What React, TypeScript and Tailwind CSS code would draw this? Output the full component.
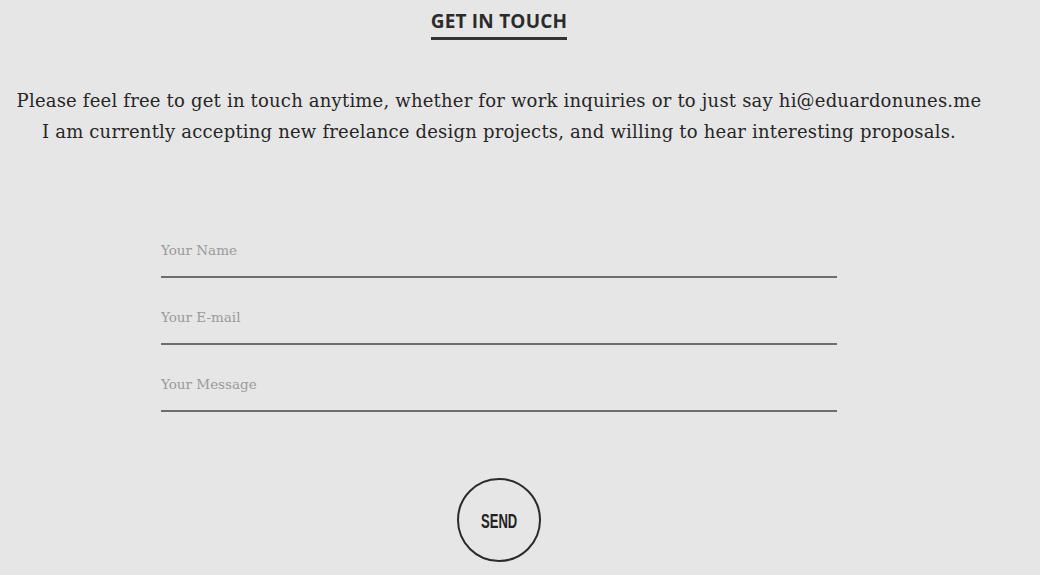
export default function App() {
  return (
    <div className="flex min-h-[575px] w-full flex-col items-center bg-[#e6e6e6] pr-[42px] text-[#333]">
      <h2 className="mt-[8px] border-b-[3px] border-[#333] pb-[3px] font-['Open_Sans',sans-serif] text-[19px] font-bold leading-[26px] tracking-[0.2px] text-[#2b2b2b]">
        GET IN TOUCH
      </h2>

      <div className="mt-[45px] text-center font-['DejaVu_Serif',serif] text-[18px] leading-[31px] tracking-[0.2px] text-[#262626]">
        <p>Please feel free to get in touch anytime, whether for work inquiries or to just say hi@eduardonunes.me</p>
        <p>I am currently accepting new freelance design projects, and willing to hear interesting proposals.</p>
      </div>

      <form className="mt-[82px] flex w-[676px] flex-col gap-[18px]">
        <input
          placeholder="Your Name"
          className="h-[49px] border-b-2 border-[#6e6e6e] bg-transparent pb-[5px] font-['DejaVu_Serif',serif] text-[13.5px] outline-none placeholder:text-[#9a9a9a]"
        />
        <input
          placeholder="Your E-mail"
          className="h-[49px] border-b-2 border-[#6e6e6e] bg-transparent pb-[5px] font-['DejaVu_Serif',serif] text-[13.5px] outline-none placeholder:text-[#9a9a9a]"
        />
        <input
          placeholder="Your Message"
          className="h-[49px] border-b-2 border-[#6e6e6e] bg-transparent pb-[5px] font-['DejaVu_Serif',serif] text-[13.5px] outline-none placeholder:text-[#9a9a9a]"
        />
      </form>

      <button
        type="button"
        className="mt-[66px] flex h-[84px] w-[84px] items-center justify-center rounded-full border-2 border-[#2b2b2b] text-[#222]"
      >
        <span className="inline-block scale-x-[0.62] font-['Liberation_Sans',sans-serif] text-[21px] font-bold leading-none">
          SEND
        </span>
      </button>
    </div>
  );
}
